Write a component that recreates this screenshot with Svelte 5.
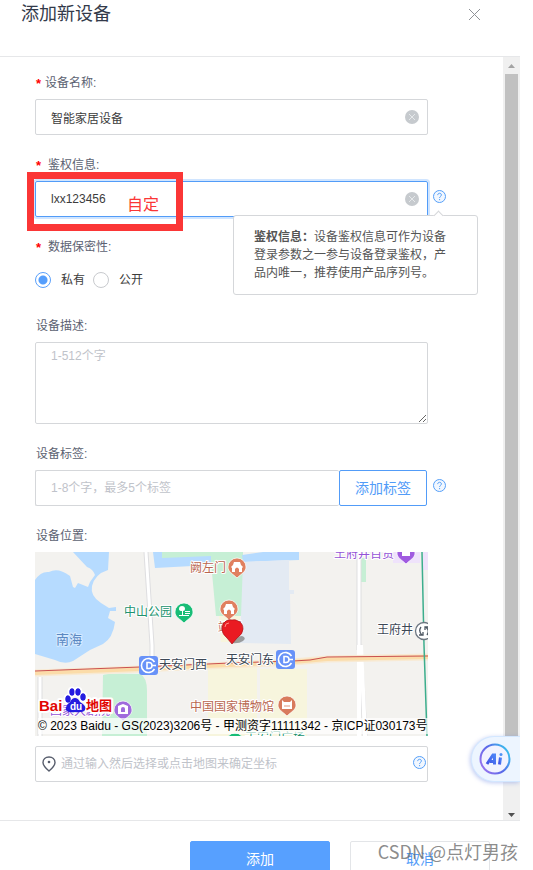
<script>
  let name = "智能家居设备";
  let auth = "lxx123456";
  let secrecy = "private";
  let description = "";
  let tag = "";
  let location = "";
</script>

<style>
  :global(body) {
    background: #fff;
  }

  .dialog,
  .dialog * {
    box-sizing: border-box;
  }

  .dialog {
    position: relative;
    height: 100vh;
    padding-right: 13px;
    overflow: hidden;
    color: #3c3c3c;
    font-family: "Liberation Sans", "Noto Sans CJK SC", sans-serif;
    font-size: 12px;
    line-height: 18px;
  }

  button,
  input,
  textarea {
    margin: 0;
    padding: 0;
    border: 0;
    outline: 0;
    background: none;
    color: inherit;
    font: inherit;
  }

  button {
    cursor: pointer;
  }

  svg {
    display: block;
  }

  header {
    display: flex;
    justify-content: space-between;
    align-items: center;
    padding: 2px 39px 30px 21px;
    border-bottom: 1px solid #e6e7e9;
  }

  h1 {
    margin: 0;
    color: #333a4a;
    font-size: 18px;
    font-weight: 400;
    line-height: 24px;
  }

  .body {
    position: relative;
    display: flex;
  }

  form {
    flex: 1;
    min-width: 0;
    display: flex;
    flex-direction: column;
    gap: 21px;
    padding: 17px 57px 38px 35px;
  }

  .item {
    display: flex;
    flex-direction: column;
    gap: 7px;
    margin: 0;
    padding: 0;
    border: 0;
  }

  .label {
    display: flex;
    gap: 7px;
    padding: 0 1px;
    color: #5c6272;
  }

  .label.near {
    gap: 4px;
  }

  .star {
    width: 5px;
    height: 18px;
    color: #f00;
    font-size: 13px;
    font-weight: 700;
    line-height: 20px;
  }

  .row {
    position: relative;
    display: grid;
    grid-template-columns: minmax(0, 1fr) 13px;
    gap: 5px;
  }

  .help {
    height: 13px;
    margin-top: 9px;
  }

  .field {
    display: flex;
    align-items: center;
    height: 36px;
    padding: 0 8px 0 15px;
    border: 1px solid #d5d7da;
    border-radius: 2px;
  }

  .field input {
    flex: 1;
    min-width: 0;
    height: 34px;
  }

  .field.active {
    border-color: #529cf8;
    box-shadow: 0 0 0 2px #d0e5ff;
  }

  ::placeholder {
    color: #bfc3ca;
    opacity: 1;
  }

  .radios {
    display: flex;
    align-items: center;
    gap: 8px;
    height: 33px;
  }

  .radios label {
    display: flex;
    align-items: center;
    gap: 10px;
  }

  .radios input {
    appearance: none;
    width: 16px;
    height: 16px;
    border: 1px solid #c8cace;
    border-radius: 50%;
  }

  .radios input:checked {
    border-color: #5aa0fb;
    background: radial-gradient(circle, #559efc 4px, #fff 5px);
  }

  textarea {
    height: 82px;
    padding: 4px 15px;
    border: 1px solid #d5d7da;
    border-radius: 2px;
    resize: vertical;
  }

  .tags {
    display: flex;
  }

  .tags .field {
    flex: 1;
    min-width: 0;
    border-right: 0;
  }

  .add-tag {
    width: 88px;
    height: 36px;
    margin-right: 1px;
    border: 1px solid #529cf8;
    border-radius: 2px;
    color: #529cf8;
    font-size: 14px;
  }

  .mark {
    position: absolute;
    top: -9px;
    left: -8px;
    width: 156px;
    height: 59px;
    padding: 17px;
    border: 7px solid #fb3636;
    color: #fb3636;
    font-size: 16px;
    text-align: right;
    pointer-events: none;
  }

  .tooltip {
    position: absolute;
    z-index: 2;
    top: 34px;
    right: -32px;
    width: 245px;
    padding: 12px 20px;
    border: 1px solid #d5d7da;
    border-radius: 3px;
    background: #fff;
    color: #555;
  }

  .tooltip::before {
    content: "";
    position: absolute;
    top: -4px;
    right: 35px;
    width: 6px;
    height: 6px;
    border: solid #d5d7da;
    border-width: 1px 0 0 1px;
    background: #fff;
    transform: rotate(45deg);
  }

  .place {
    display: flex;
    flex-direction: column;
    gap: 10px;
  }

  .map {
    position: relative;
    height: 184px;
    overflow: hidden;
    background: #f3f2ef;
  }

  .map svg {
    width: 100%;
    height: 184px;
  }

  .map text {
    font-size: 12px;
    stroke: #fff;
    stroke-width: 2px;
    stroke-linejoin: round;
    paint-order: stroke;
  }

  .map .sea {
    font-size: 13px;
    fill: #5a88c2;
    stroke: #d5eaff;
  }

  .map .gate {
    fill: #b9664f;
  }

  .map .park {
    fill: #20926d;
  }

  .map .shop {
    fill: #9453d6;
  }

  .map .station {
    fill: #3d4855;
  }

  .map .bai,
  .map .ditu {
    font-size: 15px;
    font-weight: 700;
    fill: #e10602;
    stroke-width: 4px;
  }

  .map .ditu {
    font-size: 13px;
  }

  .map .du {
    font-size: 10px;
    font-weight: 700;
    fill: #fff;
    stroke: none;
  }

  .copyright {
    position: absolute;
    bottom: 2px;
    left: 3px;
    right: 0;
    height: 16px;
    background: rgba(255, 255, 255, 0.7);
    color: #000;
    line-height: 16px;
    white-space: nowrap;
  }

  .location {
    gap: 5px;
    padding: 0 1px 0 6px;
  }

  .location .help {
    margin-bottom: 13px;
  }

  .scrollbar {
    display: flex;
    flex-direction: column;
    width: 17px;
    background: #f0f0f0;
  }

  .scrollbar svg {
    width: 17px;
    height: 17px;
  }

  .track {
    flex: 1;
    padding: 0 2px;
  }

  .thumb {
    height: 92%;
    background: #c1c1c1;
  }

  .assistant {
    position: absolute;
    right: 0;
    bottom: 38px;
    width: 49px;
    height: 46px;
    padding-left: 7px;
    border: 1px solid #d3e7ff;
    border-right: 0;
    border-radius: 23px 0 0 23px;
    background: #edf5ff;
    box-shadow: -1px 1px 4px rgba(94, 124, 224, 0.4);
    clip-path: inset(-8px 0 -8px -8px);
  }

  footer {
    display: flex;
    justify-content: flex-end;
    gap: 20px;
    padding: 20px 30px 20px 0;
    border-top: 1px solid #e6e7e9;
  }

  footer button {
    width: 140px;
    height: 36px;
    border: 1px solid #e3e5e8;
    border-radius: 2px;
    color: #529cf8;
    font-size: 14px;
  }

  footer .primary {
    border-color: #57a0ff;
    background: #57a0ff;
    color: #fff;
  }

  .watermark {
    position: absolute;
    right: 15px;
    bottom: 6px;
    color: rgba(110, 110, 110, 0.8);
    font-family: "Noto Sans CJK SC", sans-serif;
    font-size: 18px;
    line-height: 26px;
    pointer-events: none;
  }
</style>

{#snippet clear()}
  <button type="button" aria-label="清空">
    <svg width="14" height="14" viewBox="0 0 14 14">
      <circle cx="7" cy="7" r="7" fill="#c6cace" />
      <path d="M4 4l6 6M10 4l-6 6" stroke="#e6e9eb" />
    </svg>
  </button>
{/snippet}

{#snippet help()}
  <button type="button" class="help" aria-label="帮助">
    <svg width="13" height="13" viewBox="0 0 13 13" fill="none" stroke="#559ff8">
      <circle cx="6.5" cy="6.5" r="6" fill="#f1f7ff" />
      <path d="M4.7 5.1c0-2.5 3.7-2.4 3.7-.1 0 1.3-1.8 1.4-1.8 2.9M6.6 9v1.2" />
    </svg>
  </button>
{/snippet}

{#snippet pin(x, y, color)}
  <path
    transform="translate({x} {y})"
    d="M0-9a9 9 0 0 1 9 9c0 5-5 7-9 11-4-4-9-6-9-11a9 9 0 0 1 9-9z"
    fill={color}
    stroke="#fff"
    stroke-width=".7" />
{/snippet}

{#snippet gate(x, y)}
  <path
    transform="translate({x} {y})"
    d="M-3-5h6l1 3 2 2-1 1v4H2V2q-2-3-4 0v3h-3V1l-1-1 2-2z"
    fill="#fff" />
{/snippet}

{#snippet metro(x, y)}
  <g transform="translate({x} {y})">
    <rect width="19" height="19" rx="3" fill="#6892f8" />
    <g fill="none" stroke="#fff" stroke-width="1.6">
      <path d="M15.5 6a7 7 0 1 0 0 7" />
      <path d="M8 6.5h2q3 0 3 3t-3 3H8zM13 9.5h4" />
    </g>
  </g>
{/snippet}

<div class="dialog">
  <header>
    <h1>添加新设备</h1>
    <button type="button" aria-label="关闭">
      <svg width="13" height="13" viewBox="0 0 13 13" stroke="#8f9297">
        <path d="M1 1l11 11M12 1L1 12" />
      </svg>
    </button>
  </header>

  <div class="body">
    <form id="device" on:submit|preventDefault>
      <div class="item">
        <label class="label near" for="name"><span class="star">*</span>设备名称:</label>
        <div class="row">
          <div class="field">
            <input id="name" type="text" bind:value={name} />
            {@render clear()}
          </div>
        </div>
      </div>

      <div class="item">
        <label class="label" for="auth"><span class="star">*</span>鉴权信息:</label>
        <div class="row">
          <div class="field active">
            <input id="auth" type="text" bind:value={auth} />
            {@render clear()}
          </div>
          {@render help()}
          <div class="mark">自定</div>
          <div class="tooltip" role="tooltip">
            <b>鉴权信息：</b>设备鉴权信息可作为设备登录参数之一参与设备登录鉴权，产品内唯一，推荐使用产品序列号。
          </div>
        </div>
      </div>

      <div class="item" role="radiogroup" aria-labelledby="secrecy">
        <div class="label" id="secrecy"><span class="star">*</span>数据保密性:</div>
        <div class="radios">
          <label><input type="radio" name="secrecy" value="private" bind:group={secrecy} />私有</label>
          <label><input type="radio" name="secrecy" value="public" bind:group={secrecy} />公开</label>
        </div>
      </div>

      <div class="item">
        <label class="label" for="description">设备描述:</label>
        <div class="row">
          <textarea id="description" placeholder="1-512个字" bind:value={description}></textarea>
        </div>
      </div>

      <div class="item">
        <label class="label" for="tag">设备标签:</label>
        <div class="row">
          <div class="tags">
            <div class="field">
              <input id="tag" type="text" placeholder="1-8个字，最多5个标签" bind:value={tag} />
            </div>
            <button type="button" class="add-tag">添加标签</button>
          </div>
          {@render help()}
        </div>
      </div>

      <div class="item">
        <label class="label" for="location">设备位置:</label>
        <div class="row">
          <div class="place">
            <div class="map">
              <svg viewBox="0 0 393 184" preserveAspectRatio="xMidYMid slice">
                <!-- water and parks -->
                <path d="M0 28Q6 19 14 20Q23 15 35 24L38 35L40 36L43 31L53 35L55 30L60 23Q58 17 52 15L38 0H74L73 18Q60 22 57 34Q55 44 66 51L74 56L81 55V59L75 59L73 66L80 70Q78 86 68 92L55 98L38 109Q30 113 20 108L0 102z" fill="#b6dbff" />
                <path d="M127 0H208V64L181 64L176 10L127 7z" fill="#c6efd5" />
                <path d="M118 0H127V6L176 4V13L120 16zM207 3L228 0H264V8L208 10z" fill="#b6dbff" />
                <path d="M208 10L254 8V38H259V42H255L256 92L205 91z" fill="#e3eaf3" />
                <path d="M68 123Q72 121 105 122Q112 125 112 139V184H67z" fill="#c6efd5" />
                <path d="M184 64H205V90H186zM173 112L222 110V184H173zM225 117H272V184H225z" fill="#f7f5dd" />
                <path d="M326 6h5v24h-5z" fill="#c6efd5" />
                <path d="M358 0h27v11h-27zM388 0h5v18h-5z" fill="#efe3fb" />

                <!-- roads -->
                <path d="M111 0L117 93V112M324 0V98M5 125V184M325 93L330 184" fill="none" stroke="#dedee0" stroke-width="5" />
                <path d="M111 0L117 93V112M324 0V98M5 125V184" fill="none" stroke="#fff" stroke-width="3" />
                <path d="M324 93V184M326 93L330 184" fill="none" stroke="#fff" stroke-width="4" />
                <path d="M0 121L105 117L258 110L292 107L393 105" fill="none" stroke="#f8ead3" stroke-width="7" />
                <path d="M0 121L105 117L258 110L292 107L393 105" fill="none" stroke="#fbdca9" stroke-width="4" />
                <path d="M0 119L105 115L195 111L258 109L275 108L292 105L393 104" fill="none" stroke="#ca5150" stroke-width="1" />
                <path d="M387 0L389 93L392 184" fill="none" stroke="#3cae8d" stroke-width="1.5" />

                <text x="155" y="20" class="gate">阙左门</text>
                <text x="89" y="64" class="park">中山公园</text>
                <text x="21" y="92" class="sea">南海</text>
                <text x="299" y="6" class="shop">王府井百货</text>
                <text x="342" y="82" class="station">王府井</text>
                <text x="183" y="80" class="gate">端门</text>
                <text x="124" y="117" class="station">天安门西</text>
                <text x="191" y="112" class="station">天安门东</text>
                <text x="155" y="159" class="gate">中国国家博物馆</text>
                <text x="15" y="163" class="shop">国家大剧院</text>
                <text x="210" y="190" class="park">天安门广场</text>

                {@render pin(202, 15, "#e0805f")}
                {@render gate(202, 15)}
                {@render pin(194, 57, "#e0805f")}
                {@render gate(194, 57)}
                {@render pin(252, 153, "#d87b5d")}
                <path d="M247 148l2 2h6l2-2v9h-10z" fill="#fff" />
                <path d="M250 153v2M252 153v2M254 153v2" stroke="#d87b5d" stroke-width=".8" />
                {@render pin(371, 1, "#a05be0")}
                <path d="M367 0h8v4h-8z" fill="#fff" />
                {@render pin(88, 158, "#9f6bdc")}
                <path d="M83 154l5-2 5 2v8h-10z" fill="#fff" />
                <path d="M86 160v-3a2 2 0 0 1 4 0v3z" fill="#9f6bdc" />
                {@render pin(149, 60, "#18bd76")}
                <path d="M144 57q0-3 3-3 3 0 3 3 0 2-2 2v4h6v1h-10v-1h3v-4q-3 0-3-2zM150 59h5v1h-5zM150 61h5v1h-5z" fill="#fff" />
                {@render pin(200, 190, "#18bd76")}

                {@render metro(104, 104)}
                {@render metro(241, 98)}

                <circle cx="389" cy="79" r="8.5" fill="#fff" stroke="#6c7680" stroke-width="1.3" />
                <path d="M386 75q-3 4 1 8M388 80v3h-4M392 83q3-4-1-8M390 78v-3h4" fill="none" stroke="#4c5661" stroke-width="1.3" />

                <!-- selected position -->
                <path d="M196 91q5-7 11-7 5 2 1 5-4 3-12 2z" fill="#777" opacity=".7" />
                <path d="M187 77q0-6 4-8 3-2 6-1 3-1 6 1 5 2 5 8 0 5-6 9l-5 6-5-6q-5-4-5-9z" fill="#ea1b22" stroke="#a91218" stroke-width=".7" />
                <path d="M190 75q0-4 4-4" fill="none" stroke="#ff8a86" />

                <!-- map provider logo -->
                <g fill="#241be0" stroke="#fff" stroke-width="4" paint-order="stroke">
                  <ellipse cx="33" cy="147" rx="2.5" ry="3.5" />
                  <ellipse cx="37" cy="140" rx="2.5" ry="3.5" />
                  <ellipse cx="43" cy="140" rx="2.5" ry="3.5" />
                  <ellipse cx="48" cy="145" rx="2.5" ry="3.5" />
                </g>
                <text x="4" y="159" class="bai">Bai</text>
                <text x="51" y="158" class="ditu">地图</text>
                <g fill="#241be0">
                  <ellipse cx="33" cy="147" rx="2.5" ry="3.5" />
                  <ellipse cx="37" cy="140" rx="2.5" ry="3.5" />
                  <ellipse cx="43" cy="140" rx="2.5" ry="3.5" />
                  <ellipse cx="48" cy="145" rx="2.5" ry="3.5" />
                  <path d="M40 146q3 0 5 4 7 4 5 8-2 3-10 2-7 1-9-2-1-4 4-8 2-4 5-4z" />
                </g>
                <text x="35" y="158" class="du">du</text>
              </svg>
              <div class="copyright">© 2023 Baidu - GS(2023)3206号 - 甲测资字11111342 - 京ICP证030173号</div>
            </div>

            <div class="field location">
              <svg width="14" height="16" viewBox="0 0 14 16" fill="none" stroke="#575d6c" stroke-width="1.4">
                <path d="M7 1c3.5 0 6 2.3 6 5.5C13 10 10 12.5 7 15 4 12.5 1 10 1 6.5 1 3.3 3.5 1 7 1z" />
                <circle cx="7" cy="6" r="1.3" fill="#575d6c" stroke="none" />
              </svg>
              <input id="location" type="text" placeholder="通过输入然后选择或点击地图来确定坐标" bind:value={location} />
              {@render help()}
            </div>
          </div>
        </div>
      </div>
    </form>

    <div class="scrollbar" aria-hidden="true">
      <svg viewBox="0 0 17 17"><path d="M5 11l3.5-4 3.5 4z" fill="#a3a3a3" /></svg>
      <div class="track"><div class="thumb"></div></div>
      <svg viewBox="0 0 17 17"><path d="M5 10l3.5 4 3.5-4z" fill="#505050" /></svg>
    </div>

    <button type="button" class="assistant" aria-label="AI 助手">
      <svg width="32" height="32" viewBox="0 0 32 32">
        <defs>
          <linearGradient id="ring" x1="0" y1="0.8" x2="1" y2="0.2">
            <stop offset="0" stop-color="#9a74ee" />
            <stop offset="0.5" stop-color="#5868e8" />
            <stop offset="1" stop-color="#38c4ee" />
          </linearGradient>
          <linearGradient id="ai" x1="0" y1="1" x2="1" y2="0">
            <stop offset="0" stop-color="#4051e4" />
            <stop offset="1" stop-color="#4e83f6" />
          </linearGradient>
        </defs>
        <circle cx="16" cy="16" r="14.5" fill="#f2f3ff" stroke="url(#ring)" stroke-width="2" />
        <g fill="none" stroke="url(#ai)" stroke-width="3">
          <path d="M8 21l6-9h1.5v9.5M11 18.5h4" />
          <path d="M21.5 14.5l-1 7" />
        </g>
        <circle cx="22" cy="11.5" r="1.5" fill="#4e93f6" />
      </svg>
    </button>
  </div>

  <footer>
    <button type="submit" form="device" class="primary">添加</button>
    <button type="button">取消</button>
  </footer>

  <div class="watermark">CSDN @点灯男孩</div>
</div>
